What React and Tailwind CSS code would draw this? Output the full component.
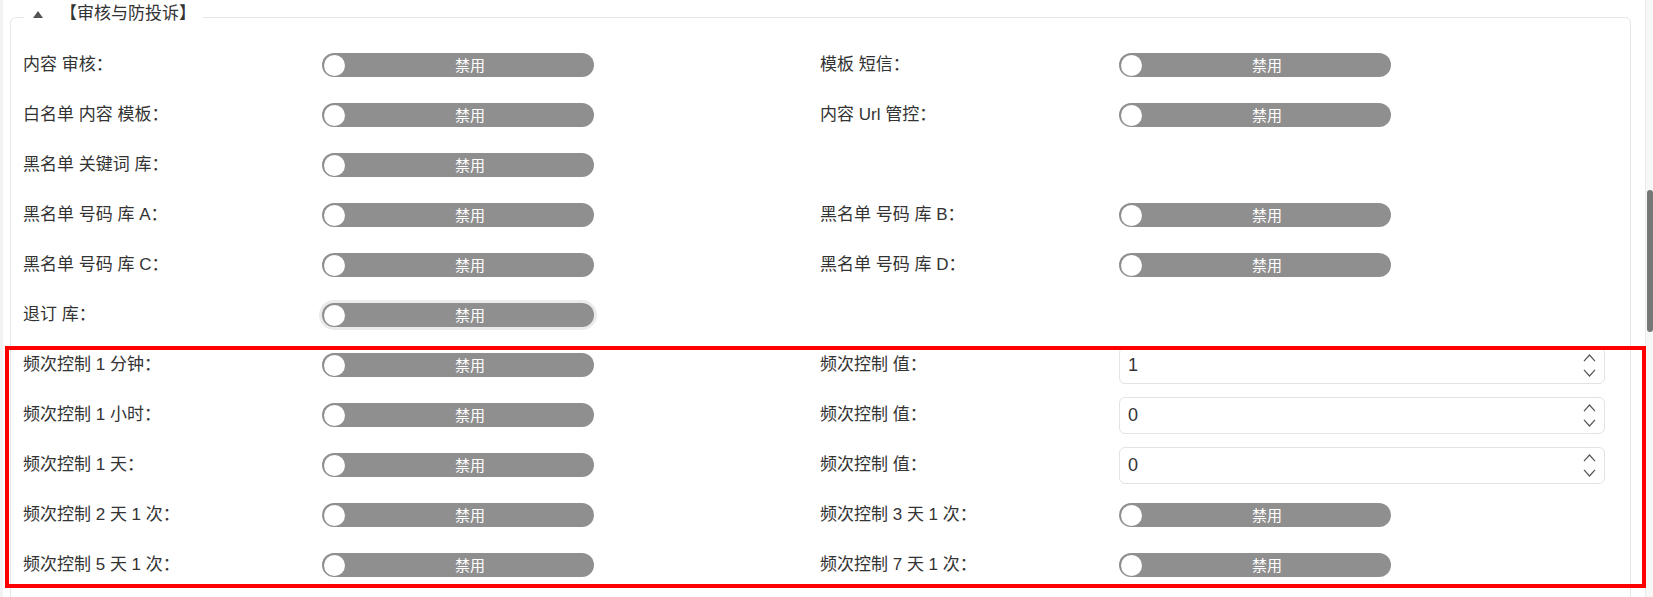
import React from 'react'

const FONT = { fontFamily: '"Liberation Sans", "Noto Sans CJK SC", sans-serif' }

const rows = [
  [{ label: '内容 审核' }, { label: '模板 短信' }],
  [{ label: '白名单 内容 模板' }, { label: '内容 Url 管控' }],
  [{ label: '黑名单 关键词 库' }, null],
  [{ label: '黑名单 号码 库 A' }, { label: '黑名单 号码 库 B' }],
  [{ label: '黑名单 号码 库 C' }, { label: '黑名单 号码 库 D' }],
  [{ label: '退订 库', focus: true }, null],
  [{ label: '频次控制 1 分钟' }, { label: '频次控制 值', value: '1' }],
  [{ label: '频次控制 1 小时' }, { label: '频次控制 值', value: '0' }],
  [{ label: '频次控制 1 天' }, { label: '频次控制 值', value: '0' }],
  [{ label: '频次控制 2 天 1 次' }, { label: '频次控制 3 天 1 次' }],
  [{ label: '频次控制 5 天 1 次' }, { label: '频次控制 7 天 1 次' }],
  [null, { label: '', value: '' }],
]

function Toggle({ focus }) {
  return (
    <div
      className={
        'relative flex h-[24px] w-[272px] items-center rounded-full bg-[#8f8f8f] pl-[24px] ' +
        (focus ? 'ring-[3px] ring-[#ebebeb]' : '')
      }
    >
      <span className="absolute left-[1.5px] top-[1.5px] h-[21px] w-[21px] rounded-full bg-white" />
      <span className="flex-1 text-center text-[15px] leading-none text-white">禁用</span>
    </div>
  )
}

function NumberInput({ value }) {
  return (
    <div className="flex h-[37px] w-full items-center rounded-md border border-[#e3e3e3] bg-white pl-[8px] pr-[8px]">
      <span className="flex-1 text-[18px] text-[#333]">{value}</span>
      <div className="flex flex-col items-center gap-[7px]">
        <svg width="13" height="8" viewBox="0 0 13 8" fill="none">
          <path d="M1 7.2 L6.5 1 L12 7.2" stroke="#555" strokeWidth="1.2" />
        </svg>
        <svg width="13" height="8" viewBox="0 0 13 8" fill="none">
          <path d="M1 0.8 L6.5 7 L12 0.8" stroke="#555" strokeWidth="1.2" />
        </svg>
      </div>
    </div>
  )
}

function Cell({ item }) {
  if (!item) return <div />
  return (
    <div className="flex items-center">
      <div className="w-[299px] shrink-0 text-[17px] text-[#333]">{item.label ? item.label + '：' : ''}</div>
      {item.value !== undefined ? <NumberInput value={item.value} /> : <Toggle focus={item.focus} />}
    </div>
  )
}

export default function App() {
  return (
    <div className="relative flex h-[597px] w-[1653px] overflow-hidden bg-white" style={FONT}>
      <div className="flex-1 border-l-[3px] border-[#f2f2f2] pl-[7px] pr-[14px] pt-[3px]">
        <fieldset className="rounded-md border border-[#e6e6e6] px-[12px] pr-[25px] pt-[9px]">
          <legend className="ml-[1px] flex h-[28px] items-start pl-[9px] pr-[7px]">
            <span className="flex h-[22px] items-center">
              <svg width="10" height="7" viewBox="0 0 10 7">
                <path d="M5 0 L10 7 L0 7 Z" fill="#555" />
              </svg>
            </span>
            <span className="ml-[17px] text-[17px] leading-[22px] text-[#333]">【审核与防投诉】</span>
          </legend>
          <div className="flex flex-col">
            {rows.map((r, i) => (
              <div key={i} className="grid h-[50px] grid-cols-[797px_1fr] items-center">
                <Cell item={r[0]} />
                <Cell item={r[1]} />
              </div>
            ))}
          </div>
        </fieldset>
      </div>
      <div className="w-[8px] border-l border-[#ececec] bg-[#f7f7f7] pt-[190px]">
        <div className="ml-[1px] h-[142px] w-[6px] rounded-full bg-[#777]" />
      </div>
      <div className="pointer-events-none absolute left-[5px] top-[346px] h-[242px] w-[1641px] border-4 border-[#ff0000]" />
    </div>
  )
}
